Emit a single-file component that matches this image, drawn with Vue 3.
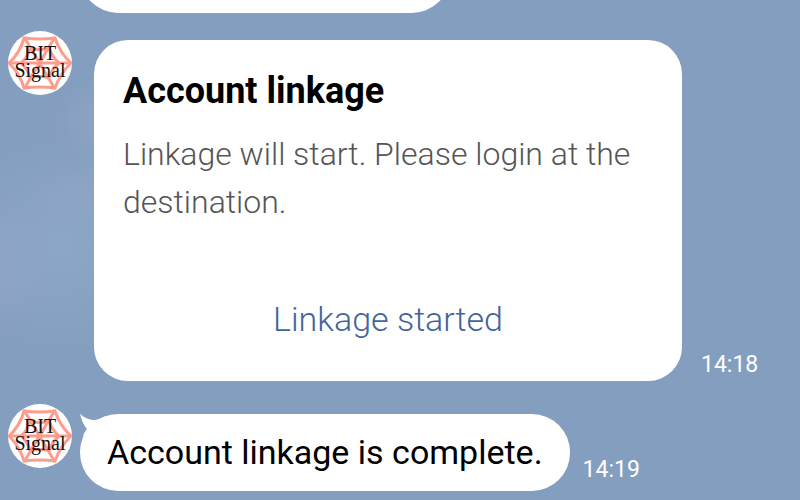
<template>
  <main class="chat">
    <article
      v-for="message in messages"
      :key="message.id"
      class="message"
    >
      <svg
        v-if="message.avatar"
        class="avatar"
        viewBox="0 0 64 64"
        role="img"
        aria-label="BIT Signal"
      >
        <circle cx="32" cy="32" r="32" fill="#ffffff" />
        <g fill="none" stroke="#ff9c8c" stroke-width="3">
          <path d="M1 32H63M16 6L47 58M47 6L16 58" />
          <path d="M16 7Q32 9 47 7Q52 22 63 32Q52 43 47 57Q32 55 16 57Q12 43 1 32Q12 22 16 7Z" />
          <path d="M22 17Q32 20 41 17Q44 26 51 32Q44 38 41 47Q32 44 22 47Q20 38 13 32Q20 26 22 17Z" />
        </g>
        <g class="avatar-name" text-anchor="middle">
          <text x="32" y="29">BIT</text>
          <text x="32" y="46">Signal</text>
        </g>
      </svg>
      <span v-else class="avatar"></span>

      <section v-if="message.type === 'card'" class="card">
        <h2>{{ message.title }}</h2>
        <p>{{ message.text }}</p>
        <a href="#">{{ message.action }}</a>
      </section>

      <div
        v-else
        class="bubble"
        :class="{ long: !message.text }"
      >
        <svg
          v-if="message.avatar"
          class="tail"
          viewBox="0 0 30 24"
          aria-hidden="true"
        >
          <path d="M0 0Q7 6 15 6Q20 5 26 2L24 20L3 22Q4 18 7 15Q2 9 0 0Z" fill="#ffffff" />
        </svg>
        <p>{{ message.text }}</p>
      </div>

      <time v-if="message.time">{{ message.time }}</time>
    </article>
  </main>
</template>

<script setup>
const messages = [
  {
    id: 1,
    type: 'bubble',
    text: ''
  },
  {
    id: 2,
    type: 'card',
    avatar: true,
    title: 'Account linkage',
    text: 'Linkage will start. Please login at the destination.',
    action: 'Linkage started',
    time: '14:18'
  },
  {
    id: 3,
    type: 'bubble',
    avatar: true,
    text: 'Account linkage is complete.',
    time: '14:19'
  }
]
</script>

<style>
body {
  margin: 0;
}
</style>

<style scoped>
.chat {
  display: flex;
  box-sizing: border-box;
  height: 100vh;
  flex-direction: column;
  justify-content: flex-end;
  gap: 18px;
  overflow: hidden;
  padding: 0 8px 9px;
  background:
    radial-gradient(ellipse 50px 45px at 100px 122px, rgba(146, 166, 200, 0.7), transparent),
    radial-gradient(ellipse 70px 40px at 90px 195px, rgba(146, 166, 200, 0.6), transparent),
    radial-gradient(ellipse 50px 70px at 0 265px, rgba(148, 166, 198, 0.6), transparent),
    radial-gradient(ellipse 130px 110px at 60px 245px, rgba(143, 169, 202, 0.8), transparent),
    #849ebf;
  font-family: Roboto, "Liberation Sans", sans-serif;
}

.message {
  display: flex;
  flex-shrink: 0;
}

.avatar {
  width: 64px;
  height: 64px;
  flex-shrink: 0;
}

.avatar-name {
  fill: #111111;
  font-family: "Liberation Serif", serif;
  font-size: 20px;
}

.card {
  display: flex;
  box-sizing: border-box;
  flex: 0 1 588px;
  flex-direction: column;
  margin: 9px 0 5px 22px;
  padding: 27px 29px 38px;
  background: #ffffff;
  border-radius: 34px;
}

.card h2,
.card p,
.bubble p {
  margin: 0;
}

.card h2 {
  color: #000000;
  font-size: 36px;
  font-weight: 700;
  line-height: 48px;
}

.card p {
  margin-top: 15px;
  color: #555555;
  font-size: 32px;
  font-weight: 300;
  line-height: 48px;
}

.card a {
  margin-top: 69px;
  color: #42659a;
  font-size: 34px;
  font-weight: 300;
  line-height: 48px;
  text-align: center;
  text-decoration: none;
}

.bubble {
  position: relative;
  box-sizing: border-box;
  min-height: 77px;
  margin: 10px 0 0 8px;
  padding: 14px 27px 15px;
  background: #ffffff;
  border-radius: 38px;
  color: #000000;
  font-size: 34px;
  line-height: 48px;
}

.bubble.long {
  flex: 0 1 370px;
}

.tail {
  position: absolute;
  top: 0;
  left: 0;
  width: 30px;
  height: 24px;
}

time {
  align-self: flex-end;
  margin-left: 13px;
  color: #ffffff;
  font-size: 23px;
  line-height: 42px;
}

.card + time {
  margin-left: 19px;
}
</style>
